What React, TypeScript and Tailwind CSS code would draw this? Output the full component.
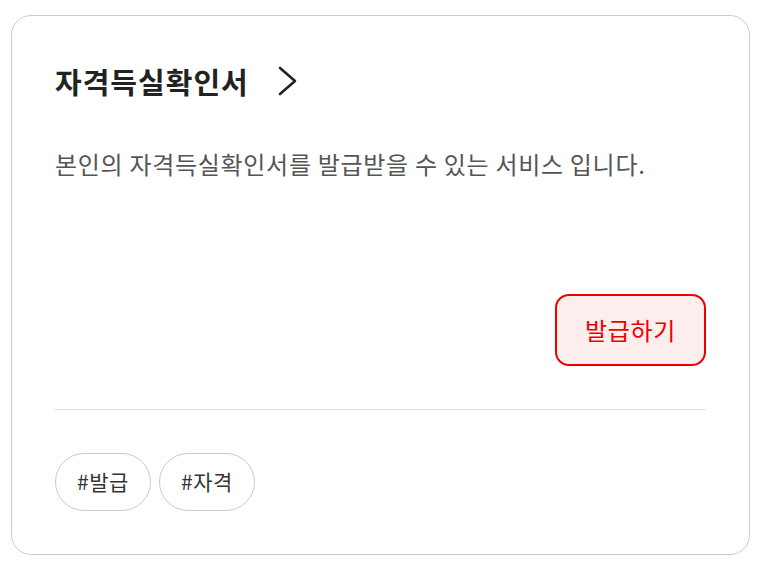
export default function App() {
  const tags = ['#발급', '#자격'];

  return (
    <div
      className="min-h-screen bg-white pl-[11px] pt-[15px]"
      style={{ fontFamily: '"Noto Sans CJK KR", "Noto Sans", sans-serif' }}
    >
      <div className="flex h-[540px] w-[739px] flex-col rounded-[20px] border border-[#cccccc] bg-white p-[43px]">
        <div className="flex h-[44px] items-center">
          <h2 className="text-[29px] font-bold leading-[44px] tracking-[1px] text-[#222222]">자격득실확인서</h2>
          <svg className="ml-[28px]" width="22" height="32" viewBox="0 0 22 32" fill="none">
            <polyline points="3,3 18,16 3,29" stroke="#222222" strokeWidth="2.6" strokeLinecap="round" strokeLinejoin="round" />
          </svg>
        </div>

        <p className="mt-[45px] text-[24px] leading-[32px] tracking-[0.7px] text-[#555555]">
          본인의 자격득실확인서를 발급받을 수 있는 서비스 입니다.
        </p>

        <div className="mt-auto flex justify-end">
          <button className="flex h-[72px] w-[151px] items-center justify-center rounded-[14px] border-2 border-[#ee0000] bg-[#fdeeee] text-[24px] tracking-[0.7px] text-[#ee0000]">
            발급하기
          </button>
        </div>

        <div className="mt-[43px] h-px bg-[#dddddd]" />

        <div className="mt-[43px] flex gap-2">
          {tags.map((t) => (
            <span
              key={t}
              className="flex h-[58px] w-[96px] items-center justify-center rounded-full border border-[#cccccc] text-[21px] tracking-[0.5px] text-[#333333]"
            >
              {t}
            </span>
          ))}
        </div>
      </div>
    </div>
  );
}
